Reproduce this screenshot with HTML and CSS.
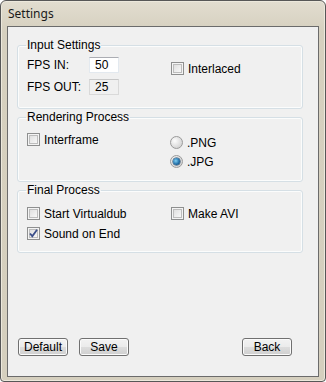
FILE: index.html
```html
<!DOCTYPE html>
<html>
<head>
<meta charset="utf-8">
<title>Settings</title>
<link rel="stylesheet" href="styles.css">
</head>
<body>
<div class="window">
  <div class="titlebar"><span class="title">Settings</span></div>
  <div class="client">
    <fieldset class="group g-input">
      <legend>Input Settings</legend>
      <div class="cols">
        <div class="fps-rows">
          <div class="fps-row"><span class="lbl">FPS IN:</span><span class="field">50</span></div>
          <div class="fps-row"><span class="lbl">FPS OUT:</span><span class="field disabled">25</span></div>
        </div>
        <div class="col-right interlaced">
          <div class="check"><span class="box"></span><span class="txt">Interlaced</span></div>
        </div>
      </div>
    </fieldset>

    <fieldset class="group g-render">
      <legend>Rendering Process</legend>
      <div class="cols">
        <div class="col-left">
          <div class="check"><span class="box"></span><span class="txt">Interframe</span></div>
        </div>
        <div class="col-right radios">
          <div class="radio"><span class="dot"></span><span class="txt">.PNG</span></div>
          <div class="radio"><span class="dot on"></span><span class="txt">.JPG</span></div>
        </div>
      </div>
    </fieldset>

    <fieldset class="group g-final">
      <legend>Final Process</legend>
      <div class="cols">
        <div class="col-left stack">
          <div class="check"><span class="box"></span><span class="txt">Start Virtualdub</span></div>
          <div class="check"><span class="box"><svg width="11" height="11" viewBox="0 0 11 11"><path d="M2 5.5 L4.3 8.2 L9 1.8" fill="none" stroke="#3c4f8a" stroke-width="1.8"/></svg></span><span class="txt">Sound on End</span></div>
        </div>
        <div class="col-right">
          <div class="check"><span class="box"></span><span class="txt">Make AVI</span></div>
        </div>
      </div>
    </fieldset>

    <div class="buttons">
      <button class="btn default">Default</button>
      <button class="btn">Save</button>
      <button class="btn back">Back</button>
    </div>
  </div>
</div>
</body>
</html>
```

FILE: styles.css
```css
* { box-sizing: border-box; }
html, body { margin: 0; padding: 0; background: #ffffff; }
body { width: 326px; height: 382px; overflow: hidden; }

.window {
  width: 326px;
  height: 382px;
  border: 1px solid #575757;
  border-radius: 6px 6px 4px 4px;
  background: linear-gradient(#e2ddd0, #d6d0bf 30px, #d5cfbe);
  padding: 0 6px 4px 6px;
  display: flex;
  flex-direction: column;
  box-shadow: inset 0 0 0 1px #ece8dc;
}

.titlebar {
  height: 25px;
  flex: none;
  display: flex;
  align-items: center;
  padding: 1px 0 0 1px;
}
.title {
  font-family: "Noto Sans", "Open Sans", sans-serif;
  font-size: 12px;
  color: #1a1a1a;
  line-height: 14px;
}

.client {
  flex: 1;
  background: #f0f0f0;
  border: 1px solid #6b6b6b;
  display: flex;
  flex-direction: column;
  padding: 0 0 20px 0;
  font-family: "Liberation Sans", Arial, sans-serif;
  font-size: 12px;
  color: #000;
}

.group {
  margin: 1px 15px 0 9px;
  border: 1px solid #d5dfe5;
  border-radius: 3px;
  padding: 0 8px 0 9px;
  box-shadow: inset 0 0 0 1px #fbfcfc;
}
.group legend {
  padding: 0 1px;
  margin-left: -1px;
  line-height: 14px;
  font-size: 12px;
  color: #000;
}
.g-input { margin-top: 11px; padding-top: 5px; padding-bottom: 13px; }
.g-render { padding-top: 9px; padding-bottom: 13px; }
.g-final { padding-top: 10px; padding-bottom: 12px; }

.cols {
  display: grid;
  grid-template-columns: 143px 1fr;
  align-items: start;
}

.fps-rows { display: flex; flex-direction: column; gap: 6px; }
.fps-row { display: flex; align-items: center; height: 16px; }
.lbl { width: 62px; line-height: 14px; }
.field {
  width: 30px;
  height: 16px;
  border: 1px solid #e3e9ef;
  border-top-color: #abadb3;
  background: #fff;
  padding: 0 0 0 5px;
  line-height: 15px;
  font-size: 12px;
}
.field.disabled {
  background: #f0f0f0;
  border-color: #d9d9d9;
  border-top-color: #c6c6c6;
}

.interlaced { padding-top: 5px; padding-left: 1px; }
.col-right { padding-left: 1px; }
.col-right.radios { padding-left: 0; }

.check, .radio {
  display: flex;
  align-items: center;
  height: 13px;
}
.txt { line-height: 14px; }
.box {
  width: 13px;
  height: 13px;
  flex: none;
  border: 1px solid #8e8f8f;
  background: linear-gradient(135deg, #d9d9d9, #f7f7f7 80%);
  box-shadow: inset 0 0 0 1px #f4f4f4, inset 0 0 0 2px #bdbdbd;
  margin-right: 4px;
  display: flex;
  align-items: center;
  justify-content: center;
}
.box svg { display: block; }

.stack { display: flex; flex-direction: column; gap: 7px; }

.radios { display: flex; flex-direction: column; gap: 6px; padding-top: 3px; }
.dot {
  width: 13px;
  height: 13px;
  flex: none;
  border-radius: 50%;
  border: 1px solid #9a9a9a;
  background: radial-gradient(circle at 35% 35%, #fdfdfd, #d7d7d7 70%);
  margin-right: 4px;
  display: flex;
  align-items: center;
  justify-content: center;
}
.dot.on::after {
  content: "";
  width: 7px;
  height: 7px;
  border-radius: 50%;
  background: radial-gradient(circle at 40% 40%, #7fd0f4, #1d6aa4 60%, #123f66);
  box-shadow: 0 0 0 0.5px #1b3f5e;
}

.buttons {
  margin-top: auto;
  display: flex;
  padding: 0 26px 0 10px;
  gap: 11px;
}
.btn {
  width: 50px;
  height: 18px;
  padding: 0;
  border: 1px solid #707070;
  border-radius: 3px;
  background: linear-gradient(#f2f2f2, #ebebeb 50%, #dddddd 50%, #cfcfcf);
  box-shadow: inset 0 0 0 1px #fbfbfb;
  font-family: "Liberation Sans", Arial, sans-serif;
  font-size: 12px;
  line-height: 14px;
  color: #000;
}
.btn.default {
  box-shadow: inset 0 0 0 1px #fbfbfb;
}
.btn.back { margin-left: auto; }
```
